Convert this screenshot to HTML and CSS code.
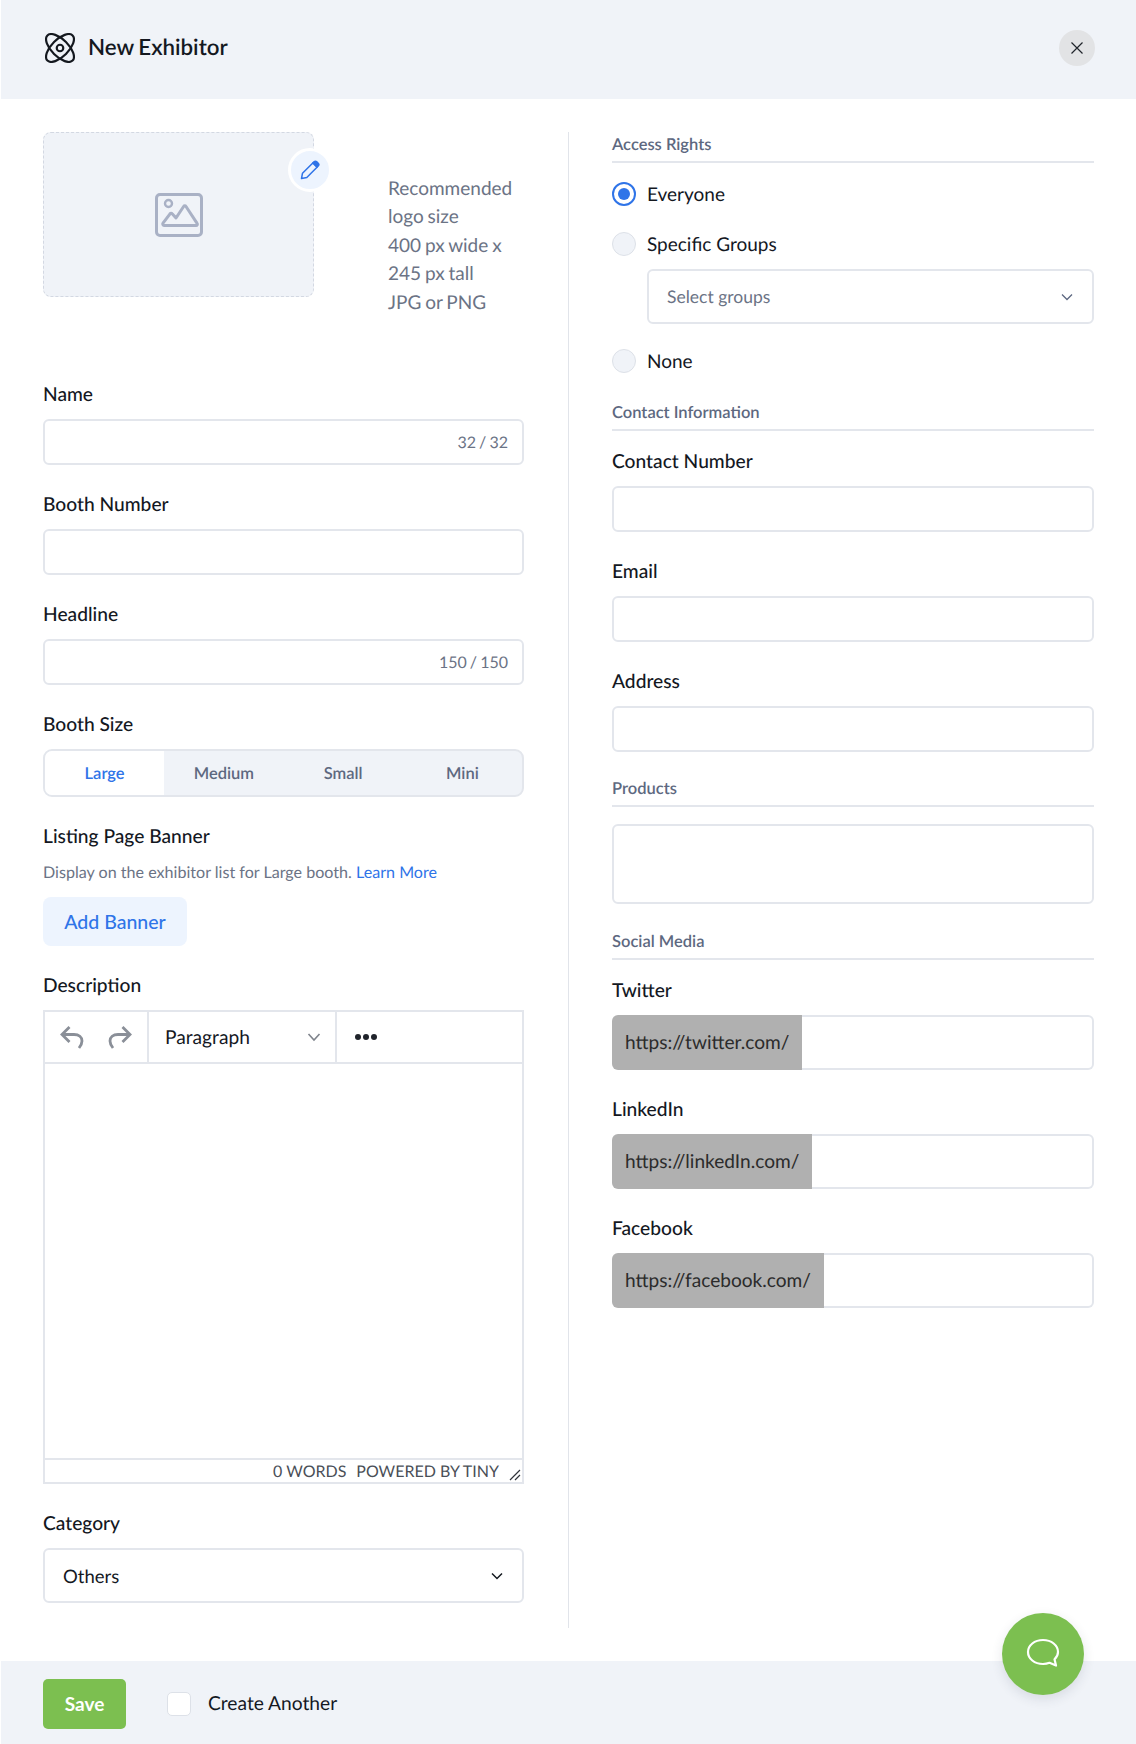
FILE: index.html
```html
<!DOCTYPE html>
<html lang="en">
<head>
<meta charset="utf-8">
<title>New Exhibitor</title>
<link rel="stylesheet" href="styles.css">
</head>
<body>
<div class="page">
  <header class="top">
    <div class="top-title">
      <svg class="atom" viewBox="0 0 32 32" fill="none" stroke="#14181f" stroke-width="2.300">
        <circle cx="16" cy="16" r="3.500"/>
        <ellipse cx="16" cy="16" rx="19" ry="9" transform="rotate(45 16 16)"/>
        <ellipse cx="16" cy="16" rx="19" ry="9" transform="rotate(-45 16 16)"/>
      </svg>
      <h1>New Exhibitor</h1>
    </div>
    <button class="close" type="button" aria-label="Close">
      <svg viewBox="0 0 14 14" fill="none" stroke="#20242b" stroke-width="1.200"><path d="M1.500 1.500l11 11M12.500 1.500l-11 11"/></svg>
    </button>
  </header>

  <main class="body">
    <section class="col-left">
      <div class="logo-row">
        <div class="logo-box">
          <svg class="pic" viewBox="0 0 48 44" fill="none" stroke="#a9b1c5" stroke-width="3">
            <rect x="1.500" y="1.500" width="45" height="41" rx="3.500"/>
            <circle cx="13.500" cy="10.500" r="3.500" stroke-width="2.400"/>
            <path d="M9 32.500h32c1.200 0 1.800-1.200 1.100-2.200L31 13.500c-.6-.9-1.800-.9-2.400 0L21 25l-3.800-4.200c-.6-.7-1.600-.7-2.200 0l-7 9.400c-.7 1 0 2.300 1 2.300z" stroke-linejoin="round"/>
          </svg>
          <span class="edit">
            <svg viewBox="0 0 20 20" fill="none" stroke="#2f74e8" stroke-width="1.500"><path d="M1.500 18.500l1-5.300L12.800 3l4.200 4.200L6.800 17.500z" stroke-linejoin="round"/><path d="M13 2.800l1-1c.8-.8 2-.8 2.800 0l1.400 1.400c.8.800.8 2 0 2.800l-1 1z" fill="#2f74e8"/></svg>
          </span>
        </div>
        <p class="logo-hint">Recommended logo size<br>400 px wide x<br>245 px tall<br>JPG or PNG</p>
      </div>

      <div class="field">
        <label>Name</label>
        <div class="input"><span class="count">32 / 32</span></div>
      </div>
      <div class="field">
        <label>Booth Number</label>
        <div class="input"></div>
      </div>
      <div class="field">
        <label>Headline</label>
        <div class="input"><span class="count">150 / 150</span></div>
      </div>
      <div class="field">
        <label>Booth Size</label>
        <div class="segments">
          <span class="seg seg-on">Large</span>
          <span class="seg">Medium</span>
          <span class="seg">Small</span>
          <span class="seg">Mini</span>
        </div>
      </div>
      <div class="field">
        <label>Listing Page Banner</label>
        <p class="helper">Display on the exhibitor list for Large booth. <a href="#">Learn More</a></p>
        <button class="add-banner" type="button">Add Banner</button>
      </div>
      <div class="field">
        <label>Description</label>
        <div class="editor">
          <div class="toolbar">
            <div class="tb-group tb-history">
              <svg viewBox="0 0 24 24" fill="none" stroke="#8a8f98" stroke-width="2.800"><path d="M9.500 2L2 9.500 9.500 17M2 9.500h12c5 0 8 2.700 8 6.500 0 2.500-1 4.500-3 7"/></svg>
              <svg viewBox="0 0 24 24" fill="none" stroke="#8a8f98" stroke-width="2.800"><path d="M14.500 2L22 9.500 14.500 17M22 9.500H10c-5 0-8 2.700-8 6.500 0 2.500 1 4.500 3 7"/></svg>
            </div>
            <div class="tb-group tb-format">
              <span>Paragraph</span>
              <svg viewBox="0 0 14 14" fill="none" stroke="#7f848c" stroke-width="1.600"><path d="M1.500 4l5.500 6 5.500-6"/></svg>
            </div>
            <div class="tb-group tb-more"><i></i><i></i><i></i></div>
          </div>
          <div class="editor-area"></div>
          <div class="statusbar">
            <span>0 WORDS</span><span>POWERED BY TINY</span>
            <svg viewBox="0 0 12 12" fill="none" stroke="#30343a" stroke-width="1.200"><path d="M1 11L11 1M6 11l5-5"/></svg>
          </div>
        </div>
      </div>
      <div class="field">
        <label>Category</label>
        <div class="select select-dark">
          <span>Others</span>
          <svg viewBox="0 0 14 14" fill="none" stroke="#14181f" stroke-width="1.500"><path d="M2 4.500l5 5 5-5"/></svg>
        </div>
      </div>
    </section>

    <section class="col-right">
      <h2 class="sec">Access Rights</h2>
      <div class="radios">
        <div class="radio-line"><span class="radio radio-on"></span>Everyone</div>
        <div class="radio-line radio-line-tight"><span class="radio"></span>Specific Groups</div>
        <div class="select select-groups">
          <span>Select groups</span>
          <svg viewBox="0 0 14 14" fill="none" stroke="#5d6880" stroke-width="1.300"><path d="M2 4.500l5 5 5-5"/></svg>
        </div>
        <div class="radio-line"><span class="radio"></span>None</div>
      </div>

      <h2 class="sec">Contact Information</h2>
      <div class="field">
        <label>Contact Number</label>
        <div class="input"></div>
      </div>
      <div class="field">
        <label>Email</label>
        <div class="input"></div>
      </div>
      <div class="field field-last">
        <label>Address</label>
        <div class="input"></div>
      </div>

      <h2 class="sec sec-tight">Products</h2>
      <div class="textarea"></div>

      <h2 class="sec">Social Media</h2>
      <div class="field">
        <label>Twitter</label>
        <div class="prefixed"><span class="prefix">https://twitter.com/</span><span class="prefixed-rest"></span></div>
      </div>
      <div class="field">
        <label>LinkedIn</label>
        <div class="prefixed"><span class="prefix">https://linkedIn.com/</span><span class="prefixed-rest"></span></div>
      </div>
      <div class="field">
        <label>Facebook</label>
        <div class="prefixed"><span class="prefix">https://facebook.com/</span><span class="prefixed-rest"></span></div>
      </div>
    </section>
  </main>

  <footer class="bottom">
    <button class="save" type="button">Save</button>
    <span class="check"></span>
    <span class="check-label">Create Another</span>
  </footer>

  <button class="chat" type="button" aria-label="Chat">
    <svg viewBox="0 0 34 32" fill="none" stroke="#fff" stroke-width="2.200" stroke-linejoin="round"><path d="M17 2C8.500 2 2 7.300 2 14s6.500 12 15 12c2.500 0 4.500-.4 6.500-1.200L30 27.500l-1.500-6.200c2.300-2 3.500-4.600 3.500-7.300C32 7.300 25.500 2 17 2z"/></svg>
  </button>
</div>
</body>
</html>
```
FILE: styles.css
```css
* { box-sizing: border-box; }
html, body { margin: 0; padding: 0; background: #fff; }
body { font-family: Lato, "Liberation Sans", sans-serif; color: #14181f; text-rendering: geometricPrecision; }
.page { position: relative; width: 1136px; height: 1744px; display: flex; flex-direction: column; overflow: hidden; }

.top { height: 99px; margin-left: 1px; padding: 0 41px 0 44px; background: #f0f3f8; display: flex; align-items: center; justify-content: space-between; flex: none; }
.top-title { display: flex; align-items: center; gap: 13px; margin-top: -4px; }
.atom { width: 30px; height: 30px; display: block; }
.top h1 { margin: -2px 0 0; font-size: 22.300px; font-weight: 600; line-height: 30px; word-spacing: -1px; color: #14181f; }
.close { width: 36px; height: 36px; border: 0; border-radius: 50%; background: #e2e3e5; padding: 0; display: flex; align-items: center; justify-content: center; margin-top: -3px; }
.close svg { width: 14px; height: 14px; }

.body { flex: 1; display: flex; padding: 33px 42px 33px 43px; min-height: 0; }
.col-left { width: 481px; margin-right: 44px; flex: none; }
.col-right { flex: 1; border-left: 1px solid #e1e4ea; padding-left: 43px; }

.logo-row { display: flex; height: 184px; margin-bottom: 67px; }
.logo-box { position: relative; width: 271px; height: 165px; background: #f0f3f8; border: 1px dashed #d3d8e2; border-radius: 8px; display: flex; align-items: center; justify-content: center; flex: none; }
.pic { width: 48px; height: 44px; display: block; }
.edit { position: absolute; top: 15px; right: -19px; width: 44px; height: 44px; border-radius: 50%; background: #edf4fe; border: 3px solid #fff; display: flex; align-items: center; justify-content: center; }
.edit svg { width: 20px; height: 20px; }
.logo-hint { margin: 43px 0 0 74px; font-size: 19px; line-height: 28.400px; word-spacing: -1px; color: #6b7385; width: 140px; }

.field { margin-bottom: 28px; }
.field label { display: block; height: 24px; line-height: 24px; font-size: 19.200px; font-weight: 500; margin-bottom: 12px; color: #14181f; }
.input { height: 46px; border: 2px solid #e3e6ec; border-radius: 6px; display: flex; align-items: center; justify-content: flex-end; padding: 0 14px; background: #fff; }
.count { font-size: 16px; word-spacing: -1px; color: #6b7385; }

.segments { height: 48px; border: 2px solid #e3e6ec; border-radius: 9px; background: #f0f3f8; display: flex; overflow: hidden; }
.seg { flex: 1; display: flex; align-items: center; justify-content: center; font-size: 16.500px; font-weight: 600; color: #5d6880; }
.seg-on { background: #fff; color: #2f74e8; }

.helper { margin: 0 0 12px; height: 24px; line-height: 24px; font-size: 16.100px; color: #6b7385; }
.helper a { color: #2f74e8; text-decoration: none; }
.add-banner { display: block; width: 144px; height: 49px; border: 0; border-radius: 8px; background: #edf4fe; color: #2f74e8; font: 500 19.500px Lato, sans-serif; padding: 0; }

.editor { height: 474px; border: 2px solid #e3e6ec; display: flex; flex-direction: column; }
.toolbar { height: 52px; display: flex; border-bottom: 2px solid #e3e6ec; flex: none; }
.tb-group { display: flex; align-items: center; border-right: 2px solid #e3e6ec; }
.tb-history { width: 104px; justify-content: space-between; padding: 0 15px 0 15px; }
.tb-history svg { width: 24px; height: 24px; }
.tb-format { width: 188px; padding: 0 14px 0 16px; justify-content: space-between; font-size: 19.200px; }
.tb-format svg { width: 14px; height: 14px; }
.tb-more { border-right: 0; padding-left: 18px; gap: 2px; }
.tb-more i { display: block; width: 6px; height: 6px; border-radius: 50%; background: #20242b; }
.editor-area { flex: 1; }
.statusbar { height: 24px; flex: none; border-top: 2px solid #e3e6ec; display: flex; justify-content: flex-end; align-items: center; gap: 10px; font-size: 16px; color: #4a4f57; position: relative; padding-right: 23px; }
.statusbar svg { position: absolute; right: 1px; bottom: 1px; width: 12px; height: 12px; }

.select { height: 55px; border: 2px solid #e3e6ec; border-radius: 6px; display: flex; align-items: center; justify-content: space-between; background: #fff; font-size: 18.500px; padding: 0 18px; }
.select svg { width: 14px; height: 14px; }
.select-dark { color: #14181f; }
.select-groups { margin: 0 0 25px 35px; color: #6b7385; font-size: 17.500px; }

.sec { margin: 0 0 19px; height: 31px; line-height: 25px; border-bottom: 2px solid #e3e6ec; font-size: 16.500px; font-weight: 600; color: #5d6880; }
.sec-tight { margin-bottom: 17px; }
.radios { margin-bottom: 27px; }
.radio-line { display: flex; align-items: center; height: 24px; font-size: 19px; margin-bottom: 26px; color: #14181f; }
.radio-line-tight { margin-bottom: 13px; }
.radio-line:last-child { margin-bottom: 0; }
.radio { display: block; width: 24px; height: 24px; border-radius: 50%; background: #f0f3f8; border: 1px solid #dde1e8; margin-right: 11px; flex: none; position: relative; }
.radio-on { background: #fff; border: 2px solid #2f74e8; }
.radio-on::after { content: ""; position: absolute; inset: 4px; border-radius: 50%; background: #2f74e8; }
.field-last { margin-bottom: 24px; }
.textarea { height: 80px; border: 2px solid #e3e6ec; border-radius: 6px; margin-bottom: 25px; }
.prefixed { height: 55px; display: flex; }
.prefix { background: #b0b0b0; color: #2b2b2b; font-size: 19.100px; display: flex; align-items: center; padding: 0 13px; border-radius: 6px 0 0 6px; }
.prefixed-rest { flex: 1; border: 2px solid #e3e6ec; border-left: 0; border-radius: 0 6px 6px 0; }

.bottom { height: 83px; margin-left: 1px; padding: 2px 0 0 42px; background: #f0f3f8; display: flex; align-items: center; flex: none; }
.save { width: 83px; height: 50px; border: 0; border-radius: 5px; background: #7cbf50; color: #fff; font: 700 19px Lato, sans-serif; padding: 0; margin-right: 41px; }
.check { width: 24px; height: 24px; border: 1px solid #dde1e8; border-radius: 5px; background: #fff; margin-right: 17px; }
.check-label { font-size: 19.200px; color: #14181f; }

.chat { position: absolute; left: 1002px; top: 1613px; width: 82px; height: 82px; border: 0; border-radius: 50%; background: #7cbf50; padding: 0; display: flex; align-items: center; justify-content: center; box-shadow: 0 4px 12px rgba(40, 50, 70, .12); }
.chat svg { width: 34px; height: 32px; }
```
